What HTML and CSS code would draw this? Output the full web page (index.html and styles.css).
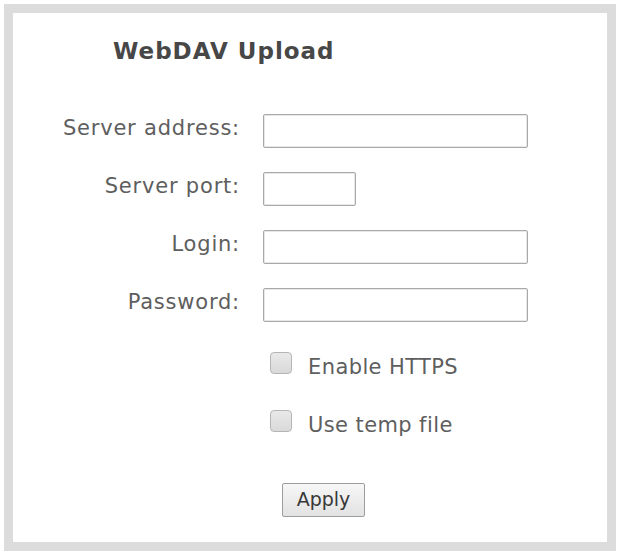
FILE: index.html
```html
<!DOCTYPE html>
<html>
<head>
<meta charset="utf-8">
<link rel="stylesheet" href="styles.css">
</head>
<body>
<div class="frame">
  <h1 class="title">WebDAV Upload</h1>
  <form class="form">
    <label class="label" for="addr">Server address:</label>
    <input class="field wide" id="addr" type="text">
    <label class="label" for="port">Server port:</label>
    <input class="field narrow" id="port" type="text">
    <label class="label" for="login">Login:</label>
    <input class="field wide" id="login" type="text">
    <label class="label" for="pw">Password:</label>
    <input class="field wide" id="pw" type="password">
  </form>
  <div class="checks">
    <label class="check"><input type="checkbox" class="box"><span>Enable HTTPS</span></label>
    <label class="check"><input type="checkbox" class="box"><span>Use temp file</span></label>
  </div>
  <div class="actions">
    <button class="apply" type="button">Apply</button>
  </div>
</div>
</body>
</html>
```

FILE: styles.css
```css
html, body {
  margin: 0;
  padding: 0;
  background: #ffffff;
}
body {
  padding: 4px 5px 5px 4px;
  font-family: "DejaVu Sans", Verdana, sans-serif;
  color: #5a5a5a;
}
.frame {
  box-sizing: border-box;
  width: 612px;
  height: 547px;
  border: 9px solid #dcdcdc;
  background: #ffffff;
  padding: 25px 0 0 0;
}
.title {
  margin: 0 0 0 100px;
  font-size: 23px;
  line-height: 26px;
  font-weight: bold;
  letter-spacing: 1px;
  color: #474747;
}
.form {
  margin-top: 50px;
  display: grid;
  grid-template-columns: 226px auto;
  column-gap: 24px;
  row-gap: 24px;
  align-items: center;
  justify-items: start;
}
.label {
  justify-self: end;
  margin-bottom: 6px;
  margin-right: -1px;
  font-size: 21px;
  line-height: 24px;
  color: #5e5e5e;
  letter-spacing: 0.8px;
}
.field {
  box-sizing: border-box;
  height: 34px;
  border: 1px solid #a9a9a9;
  border-radius: 2px;
  background: #fff;
  box-shadow: inset 0 0 0 1px #e8e8e8;
  outline: none;
}
.wide { width: 265px; }
.narrow { width: 93px; }
.checks {
  margin: 30px 0 0 257px;
  display: flex;
  flex-direction: column;
  gap: 36px;
}
.check {
  display: flex;
  align-items: center;
  gap: 16px;
  font-size: 21px;
  line-height: 24px;
  color: #5e5e5e;
  letter-spacing: 0.4px;
  height: 22px;
}
.check span { position: relative; top: 4px; }
.box {
  appearance: none;
  -webkit-appearance: none;
  box-sizing: border-box;
  margin: 0;
  width: 22px;
  height: 22px;
  border: 1px solid #b5b5b5;
  border-radius: 4px;
  background: linear-gradient(#e9e9e9, #d9d9d9);
}
.actions {
  margin: 51px 0 0 269px;
}
.apply {
  box-sizing: border-box;
  width: 83px;
  height: 34px;
  border: 1px solid #9d9d9d;
  border-radius: 2px;
  background: linear-gradient(#f7f7f7, #e2e2e2);
  font-family: "DejaVu Sans", Verdana, sans-serif;
  font-size: 19px;
  color: #383838;
  padding: 0 0 2px 0;
}
```
